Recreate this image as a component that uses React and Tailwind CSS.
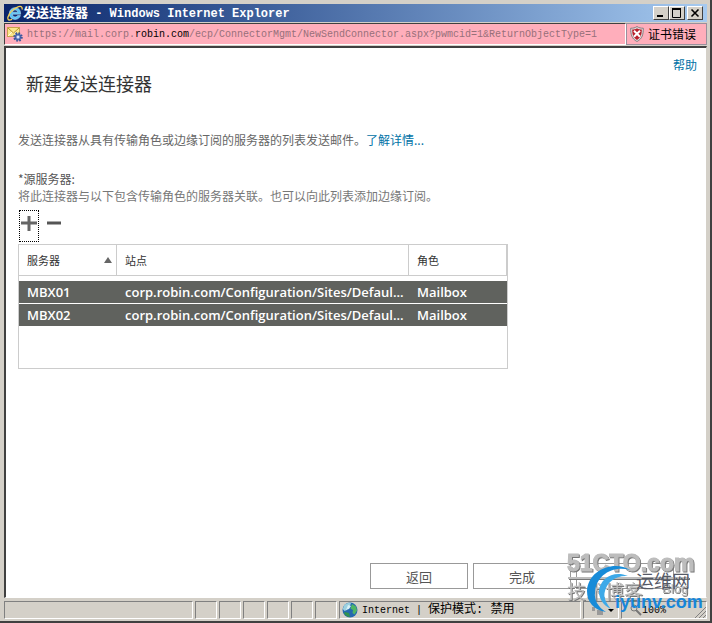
import React from 'react'

const servers = [
  {
    name: 'MBX01',
    site: 'corp.robin.com/Configuration/Sites/Defaul...',
    role: 'Mailbox',
  },
  {
    name: 'MBX02',
    site: 'corp.robin.com/Configuration/Sites/Defaul...',
    role: 'Mailbox',
  },
]

const IeLogo = () => (
  <svg viewBox="0 0 16 16" className="h-4 w-4 shrink-0" aria-hidden="true">
    <path
      d="M13.6 9.2H5.4c.1 1.7 1.2 2.7 2.8 2.7 1.1 0 1.9-.5 2.3-1.3h2.9c-.7 2.3-2.7 3.8-5.3 3.8-3.4 0-5.8-2.3-5.8-5.8 0-3.4 2.4-5.9 5.7-5.900 3.7 0 5.7 2.5 5.6 6.5zM5.5 7.2h5.1c-.1-1.3-1-2.2-2.5-2.2-1.4 0-2.3.8-2.6 2.2z"
      fill="#5cc3f5"
      stroke="#d3f0ff"
      strokeWidth=".5"
    />
    <path
      d="M15 4.5C15.8 1.5 13.5.6 10 2.3 6 4.2 2 8.5 1 12c-.8 3 1.2 3.7 4 2.3"
      fill="none"
      stroke="#f3cf54"
      strokeWidth="1.3"
    />
  </svg>
)

const PageIcon = () => (
  <svg viewBox="0 0 16 16" className="h-4 w-4 shrink-0" aria-hidden="true">
    <rect x=".5" y="1.5" width="12" height="9" fill="#fbe68a" stroke="#c9a24a" />
    <path d="M1 2l5.5 5L12 2" fill="none" stroke="#b9902f" />
    <path d="M1 10l4-4M12 10L8 6" fill="none" stroke="#fffbe0" />
    <circle
      cx="11"
      cy="11"
      r="3.5"
      fill="#5674b8"
      stroke="#3b559b"
      strokeWidth="2.5"
      strokeDasharray="1.5 1.25"
    />
    <circle cx="11" cy="11" r="1.5" fill="#dbe5fa" />
  </svg>
)

const ShieldIcon = () => (
  <svg viewBox="0 0 14 16" className="h-4 w-[14px] shrink-0" aria-hidden="true">
    <path
      d="M7 .5C5 2 3 2.2.7 2.2c0 6 .8 10.5 6.3 13.3 5.5-2.8 6.3-7.3 6.3-13.3C11 2.2 9 2 7 .5z"
      fill="#ddd"
      stroke="#8a7c80"
    />
    <path
      d="M7 2.2C5.5 3.2 4 3.6 2.2 3.6c0 5 1 8.2 4.8 10.3 3.8-2.1 4.8-5.3 4.8-10.3C10 3.6 8.5 3.2 7 2.2z"
      fill="#b8202c"
    />
    <path d="M4 4.700l6 6M10 4.700l-6 6" stroke="#fff" strokeWidth="2" />
  </svg>
)

const GlobeIcon = () => (
  <svg viewBox="0 0 16 16" className="h-4 w-4 shrink-0" aria-hidden="true">
    <circle cx="8" cy="8" r="7.5" fill="#2569b0" />
    <path d="M2 3.5C4 1 7 .3 9 1L8 4 5.5 5.5 5 8 2.5 9 .8 7z" fill="#9bd0df" />
    <path d="M10 2l4 2.5 1 4-2.5 4-2-1.5.5-3-2.5-1.5z" fill="#4fb565" />
    <path d="M3 10l4 1 1 4c-2.500 0-5-1.500-6-4z" fill="#31934f" />
    <path d="M6 3l3 1-2 3-3 1z" fill="#d7f0f5" />
  </svg>
)

const Watermark = () => (
  <svg
    viewBox="0 0 144 74"
    className="pointer-events-none absolute right-0 bottom-1 h-[74px] w-36 font-['Liberation_Sans','Noto_Sans_CJK_SC',sans-serif]"
    aria-hidden="true"
  >
    <g fill="#bdbdbd" className="drop-shadow-[1px_1px_0_#777]">
      <text x="1" y="28" fontSize="23" fontWeight="bold" stroke="#bdbdbd">
        51CTO.com
      </text>
      <path d="M2 34h121v2H2z" />
      <text x="1" y="56" fontSize="19">
        技术博客
      </text>
      <text x="96" y="50" fontSize="13">
        Blog
      </text>
    </g>
    <text x="70" y="45" fontSize="18" fill="#555966">
      运维网
    </text>
    <path
      d="M64 27C48 17 22 27 21 48c0 11 7 19 19 21-8-5-12-12-11-20 1-16 17-27 35-22z"
      fill="#178bd8"
    />
    <path
      d="M62 33c-14-6-28 2-29 15 0 8 4 14 12 18-5-6-8-12-6-18 2-9 11-16 23-15z"
      fill="#3da9e8"
    />
    <text x="49" y="65" fontSize="18" fontWeight="bold" fill="#1787da">
      iyunv.com
    </text>
  </svg>
)

const captionButton =
  'flex h-[14px] w-4 items-center justify-center border border-t-white border-l-white border-r-[#404040] border-b-[#404040] bg-[#d4d0c8]'

const actionButton =
  'h-[26px] w-[98px] border border-[#999] bg-white text-[13px] text-[#555]'

const pane = 'h-[18px] border border-t-[#808080] border-l-[#808080] border-r-white border-b-white'

const TitleBar = () => (
  <div className="flex h-[18px] items-center bg-linear-to-r from-[#0a246a] to-[#a6caf0] pr-1 pl-[3px]">
    <IeLogo />
    <div className="flex-1 truncate text-[13px] leading-[18px] font-bold text-white">
      发送连接器
      <span className="font-['Liberation_Mono','Noto_Sans_CJK_SC',monospace] text-[12px]">
        {' '}- Windows Internet Explorer
      </span>
    </div>
    <div className="flex items-center">
      <button className={captionButton} aria-label="最小化">
        <svg viewBox="0 0 10 10" className="h-[10px] w-[10px]">
          <path d="M1 8h6" stroke="#000" strokeWidth="2" />
        </svg>
      </button>
      <button className={captionButton} aria-label="最大化">
        <svg viewBox="0 0 10 10" className="h-[10px] w-[10px]">
          <path d="M.5 1v8.5h8V1" fill="none" stroke="#000" />
          <path d="M0 1h9" stroke="#000" strokeWidth="2" />
        </svg>
      </button>
      <button className={captionButton + ' ml-[2px]'} aria-label="关闭">
        <svg viewBox="0 0 10 10" className="h-[10px] w-[10px]">
          <path d="M1.5 1.5l7 7M8.5 1.5l-7 7" stroke="#000" strokeWidth="1.6" />
        </svg>
      </button>
    </div>
  </div>
)

const AddressBar = () => (
  <div className="mt-px flex h-[22px] text-[12px]">
    <div className="flex flex-1 items-center gap-1 overflow-hidden border border-t-[#404040] border-l-[#404040] border-r-white border-b-white bg-[#ffaebb] pl-[2px]">
      <PageIcon />
      <span className="truncate font-['Liberation_Mono',monospace] text-[10px] text-[#97707a]">
        https://mail.corp.<span className="text-black">robin.com</span>
        /ecp/ConnectorMgmt/NewSendConnector.aspx?pwmcid=1&amp;ReturnObjectType=1
      </span>
    </div>
    <button className="flex w-[81px] items-center gap-1 border border-[#9a8f9c] bg-[#ffaebb] pl-[3px] text-black">
      <ShieldIcon />
      证书错误
    </button>
  </div>
)

const ServerTable = () => (
  <div className="mt-[2px] h-[125px] w-[490px] max-w-full border border-[#ccc]">
    <table className="w-full table-fixed border-separate border-spacing-0 text-left">
      <thead>
        <tr className="text-[11px] text-[#333]">
          <th className="h-[31px] w-[98px] border-r border-b border-[#ccc] px-2 font-normal">
            <div className="flex items-center justify-between">
              服务器
              <svg viewBox="0 0 8 6" className="-mr-1 h-[6px] w-2">
                <path d="M4 0l4 6H0z" fill="#666" />
              </svg>
            </div>
          </th>
          <th className="border-r border-b border-[#ccc] px-2 font-normal">站点</th>
          <th className="w-[98px] border-r border-b border-[#ccc] px-2 font-normal">角色</th>
        </tr>
        <tr className="h-[5px]">
          <td colSpan={3}></td>
        </tr>
      </thead>
      <tbody className="font-['Open_Sans','Noto_Sans',sans-serif] text-[13px] leading-[22px] font-semibold whitespace-nowrap text-white">
        {servers.map((server) => (
          <tr key={server.name} className="bg-[#60625e]">
            <td className="border-b border-white pl-2">{server.name}</td>
            <td className="border-b border-white pl-2">{server.site}</td>
            <td className="border-b border-white pl-2">{server.role}</td>
          </tr>
        ))}
      </tbody>
    </table>
  </div>
)

const StatusBar = () => (
  <div className="mt-[2px] flex h-5 items-center gap-[2px] text-[12px] text-black">
    <div className={pane + ' w-[189px]'}></div>
    <div className={pane + ' w-[22px]'}></div>
    <div className={pane + ' w-[22px]'}></div>
    <div className={pane + ' w-[22px]'}></div>
    <div className={pane + ' w-[22px]'}></div>
    <div className={pane + ' w-[22px]'}></div>
    <div className={pane + ' w-[22px]'}></div>
    <div className={pane + ' flex flex-1 items-center gap-1 whitespace-pre pl-[2px]'}>
      <GlobeIcon />
      <span className="font-['Liberation_Mono','Noto_Sans_CJK_SC',monospace]">
        <span className="text-[10px]">Internet | </span>保护模式: 禁用
      </span>
    </div>
    <div className={pane + ' flex w-9 items-center justify-end pr-1'}>
      <svg viewBox="0 0 24 12" className="h-3 w-6">
        <path d="M2 3h3v4H2zM7 6h6v5H7z" fill="#999" />
        <path d="M18 5h6l-3 3z" fill="#000" />
      </svg>
    </div>
    <div className={pane + ' flex w-[86px] items-center pl-2'}>
      <svg viewBox="0 0 12 12" className="h-3 w-3">
        <circle cx="4" cy="4" r="3" fill="none" stroke="#777" />
        <path d="M6 6l5 5" stroke="#777" strokeWidth="2" />
      </svg>
      <span className="font-['Liberation_Mono',monospace] text-[10px]">100%</span>
      <svg viewBox="0 0 12 12" className="mt-1 ml-auto h-3 w-3">
        <path d="M1 12L12 1M5 12l7-7M9 12l3-3" stroke="#808080" />
      </svg>
    </div>
  </div>
)

const App = () => {
  return (
    <div className="relative flex h-screen flex-col border-r-2 border-b-2 border-[#404040] bg-[#d4d0c8] pt-1 pr-[3px] pb-px pl-1 font-['Noto_Sans_CJK_SC',sans-serif]">
      <TitleBar />
      <AddressBar />
      <main className="mt-px flex flex-1 flex-col border border-t-2 border-l-2 border-t-[#404040] border-l-[#404040] border-r-[#d4d0c8] border-b-white bg-white px-3 pb-2 text-[12px] leading-[17px] text-[#666]">
        <a href="#" className="mt-2 mr-[-3px] self-end text-[#0072a6]">
          帮助
        </a>
        <h1 className="ml-2 text-[18px] leading-5 text-[#333]">新建发送连接器</h1>
        <p className="mt-[38px]">
          发送连接器从具有传输角色或边缘订阅的服务器的列表发送邮件。
          <a href="#" className="text-[#0072a6]">
            了解详情...
          </a>
        </p>
        <h2 className="mt-[22px] text-[#555]">*源服务器:</h2>
        <p className="text-[#777]">
          将此连接器与以下包含传输角色的服务器关联。也可以向此列表添加边缘订阅。
        </p>
        <div className="mt-[6px] ml-px flex h-8 gap-2">
          <button
            className="flex w-5 justify-center border border-dotted border-black pt-1"
            aria-label="添加"
          >
            <svg viewBox="0 0 16 16" className="h-4 w-4 shrink-0">
              <path d="M8 1v15M0 8h16" stroke="#666" strokeWidth="3" />
            </svg>
          </button>
          <button className="flex w-4 pt-[5px]" aria-label="删除">
            <svg viewBox="0 0 16 16" className="h-4 w-4 shrink-0">
              <path d="M0 8h14" stroke="#555" strokeWidth="3" />
            </svg>
          </button>
        </div>
        <ServerTable />
        <div className="mt-auto mr-5 flex justify-end gap-[5px]">
          <button className={actionButton}>返回</button>
          <button className={actionButton}>完成</button>
          <button className={actionButton} aria-label="取消"></button>
        </div>
      </main>
      <StatusBar />
      <Watermark />
    </div>
  )
}

export default App
